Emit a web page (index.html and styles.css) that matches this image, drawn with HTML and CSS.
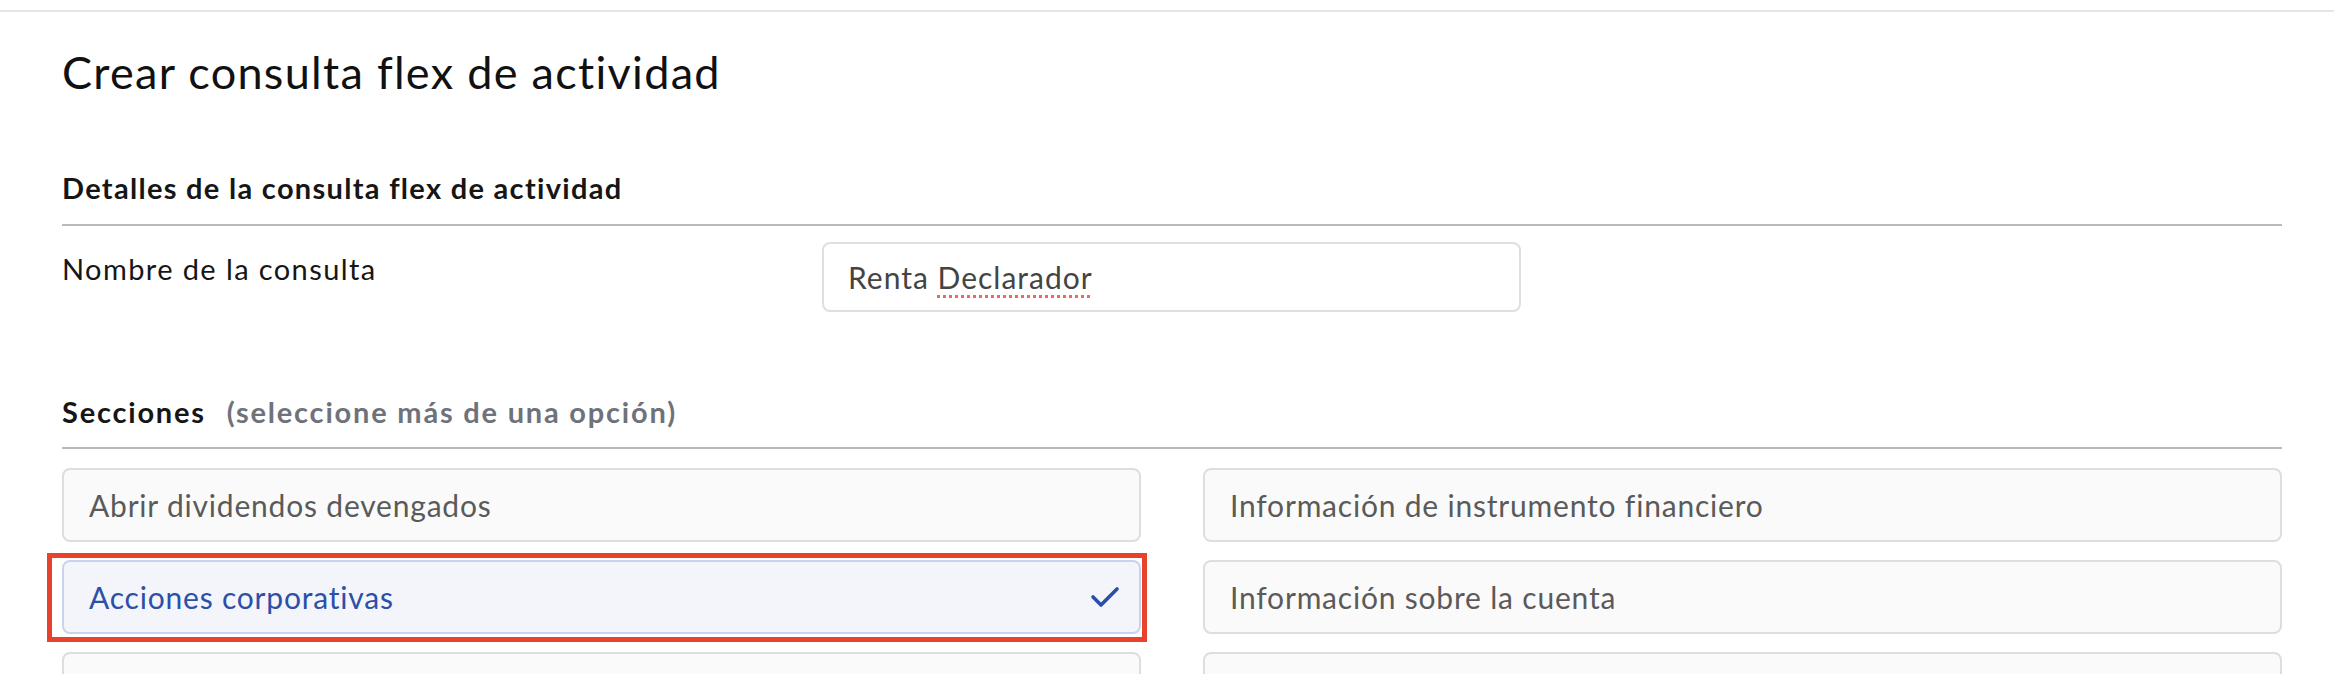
FILE: index.html
```html
<!DOCTYPE html>
<html lang="es">
<head>
<meta charset="utf-8">
<title>Crear consulta flex de actividad</title>
<link rel="stylesheet" href="styles.css">
</head>
<body>
<div class="page">
  <main class="content">
    <h1 class="title">Crear consulta flex de actividad</h1>

    <section class="block">
      <h2 class="block-head">Detalles de la consulta flex de actividad</h2>
      <div class="field-row">
        <label class="field-label">Nombre de la consulta</label>
        <div class="text-input"><span>Renta <span class="spell">Declarador</span></span></div>
      </div>
    </section>

    <section class="block sections">
      <h2 class="block-head">Secciones <span class="hint">(seleccione más de una opción)</span></h2>
      <div class="options">
        <div class="option">Abrir dividendos devengados</div>
        <div class="option">Información de instrumento financiero</div>
        <div class="option selected">
          <span>Acciones corporativas</span>
          <svg class="check" width="30" height="22" viewBox="0 0 30 22"><polyline points="3,11 11,19 27,3" fill="none" stroke="#2b4ea6" stroke-width="3.6" stroke-linecap="round" stroke-linejoin="round"/></svg>
          <span class="highlight"></span>
        </div>
        <div class="option">Información sobre la cuenta</div>
        <div class="option"></div>
        <div class="option"></div>
      </div>
    </section>
  </main>
</div>
</body>
</html>
```

FILE: styles.css
```css
html {
  height: 674px;
  overflow: hidden;
}
html, body {
  margin: 0;
  padding: 0;
  background: #ffffff;
}
body {
  font-family: "Lato", "Open Sans", sans-serif;
  color: #111;
  padding-top: 10px;
  height: 664px;
  overflow: hidden;
}
.page {
  border-top: 2px solid #e6e6e6;
  height: 662px;
  overflow: hidden;
}
.content {
  padding: 0 52px 0 62px;
}
.title {
  margin: 33px 0 0;
  font-size: 45px;
  line-height: 54px;
  letter-spacing: 1.3px;
  font-weight: 400;
  color: #111;
}
.block-head {
  margin: 0;
  font-size: 29px;
  line-height: 36px;
  letter-spacing: 1.3px;
  font-weight: 700;
  color: #161616;
  padding-bottom: 18px;
  border-bottom: 2px solid #b9b9b9;
}
.block {
  margin-top: 71px;
}
.field-row {
  display: flex;
  align-items: flex-start;
  margin-top: 16px;
}
.field-label {
  width: 760px;
  flex: none;
  font-size: 29px;
  line-height: 36px;
  letter-spacing: 1.4px;
  padding-top: 9px;
  color: #161616;
}
.text-input {
  width: 699px;
  height: 70px;
  box-sizing: border-box;
  border: 2px solid #dfdfdf;
  border-radius: 8px;
  padding: 0 24px;
  display: flex;
  align-items: center;
  font-size: 30px;
  letter-spacing: 1px;
  color: #444;
}
.spell {
  text-decoration: underline dotted #ea6b5e;
  text-decoration-thickness: 3px;
  text-underline-offset: 6px;
}
.sections {
  margin-top: 82px;
}
.sections .block-head {
  padding-bottom: 17px;
  letter-spacing: 1.8px;
}
.hint {
  color: #6e737b;
  margin-left: 12px;
}
.options {
  display: grid;
  grid-template-columns: 1fr 1fr;
  column-gap: 62px;
  row-gap: 18px;
  margin-top: 19px;
}
.option {
  position: relative;
  height: 74px;
  box-sizing: border-box;
  border: 2px solid #dedede;
  border-radius: 8px;
  background: #fafafa;
  padding: 0 19px 0 25px;
  display: flex;
  align-items: center;
  justify-content: space-between;
  font-size: 30px;
  letter-spacing: 0.8px;
  color: #5a5a5a;
}
.option.selected {
  background: #f3f5fb;
  border-color: #c9d4ec;
  color: #2c4fa7;
}
.check {
  flex: none;
}
.highlight {
  position: absolute;
  left: -17px;
  right: -8px;
  top: -9px;
  bottom: -10px;
  border: 5px solid #e8412c;
  pointer-events: none;
}
```
